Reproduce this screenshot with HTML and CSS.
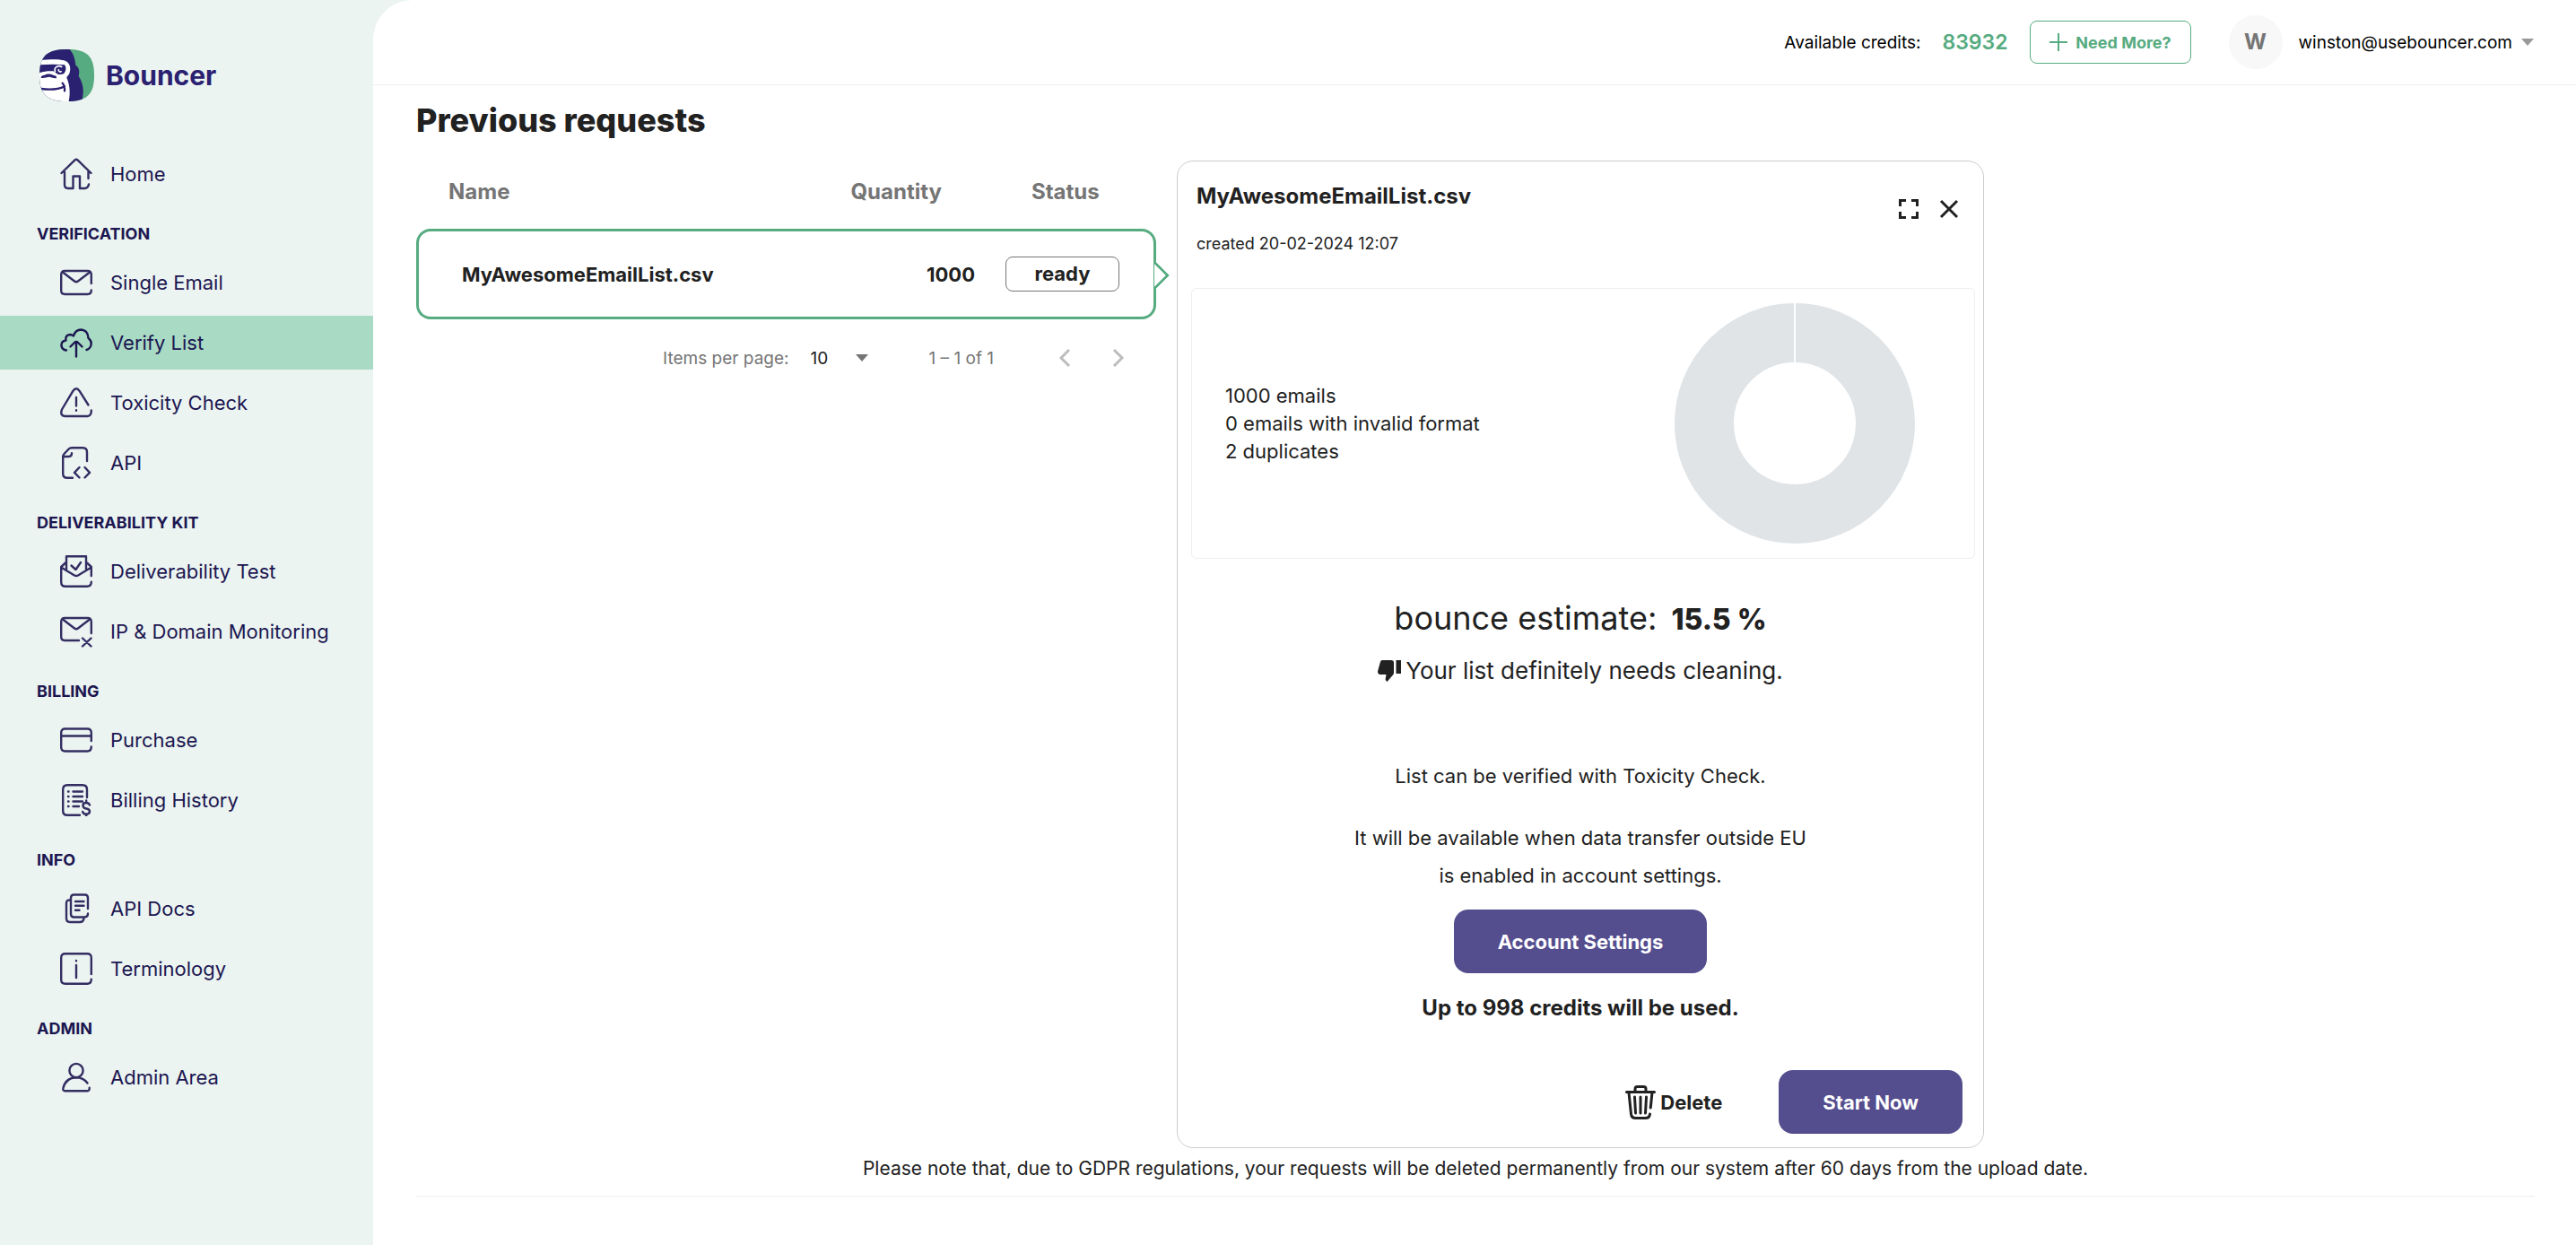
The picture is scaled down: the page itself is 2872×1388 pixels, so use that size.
FILE: index.html
```html
<!DOCTYPE html>
<html lang="en">
<head>
    <meta charset="UTF-8">
    <meta name="viewport" content="width=device-width, initial-scale=1.0">
    <title>Bouncer - Verify List</title>
    <link rel="stylesheet" href="styles.css">
</head>
<body>
    <aside class="sidebar">
        <a class="logo" href="#">
            <svg class="logo-mark" viewBox="0 0 183 174" aria-hidden="true">
                <clipPath id="logo-shape">
                    <path d="M92 0C158 0 183 22 183 87S158 174 92 174 0 152 0 87 26 0 92 0Z"/>
                </clipPath>
                <g clip-path="url(#logo-shape)">
                    <path fill="#56ab80" d="M0 0h183v174H0z"/>
                    <path fill="#2b2171" d="M0 0h101c12 14 18 30 20 53 12 8 14 20 10 36 13 22 20 45 12 78l-4 7H0Z"/>
                    <path fill="#fff" d="M0 37c38-5 66-4 82 0 22 7 24 28 18 44-3 7-8 9-9 14 8 15 14 47 7 79H0Z"/>
                    <path fill="#2b2171" d="M0 52c30-2 58-2 84 0 6 8 6 20-2 29-10 5-24 5-31-7-14-2-34-1-51 5Z"/>
                    <path fill="none" stroke="#fff" stroke-width="5" d="M53 75c-6-14 8-24 23-16M64 66c-2 8 6 12 10 7"/>
                    <path fill="#2b2171" d="M5 95c0-7 6-9 12-9 8-5 22-5 30 1 8 0 11 4 10 9-8 2-14-2-24-4-8 0-20 6-28 3Z"/>
                    <path fill="none" stroke="#2b2171" stroke-width="7" stroke-linecap="round" d="M6 132c28 4 55 3 78-8M77 113c7 8 8 17 7 26"/>
                </g>
            </svg>
            <span>Bouncer</span>
        </a>

        <nav class="menu">
            <a class="menu-item" href="#">
                <svg class="menu-icon" viewBox="0 0 36 36"><path d="M1.500 17 16.500 2.300Q18 1 19.500 2.300L34.500 17M5 15v15q0 4 4 4h5.500V20.500H22V34h5.500Q31 34 32 29.500M31.500 15v8"/></svg>
                Home
            </a>

            <h2 class="menu-title">Verification</h2>
            <a class="menu-item" href="#">
                <svg class="menu-icon" viewBox="0 0 36 36"><path d="M34.800 19V9q0-4-4-4H5.200q-4 0-4 4v18q0 4 4 4h25.600q4 0 4-4.500M3 6.500l13 10q2 1.500 4 0l13-10"/></svg>
                Single Email
            </a>
            <a class="menu-item active" href="#">
                <svg class="menu-icon" viewBox="0 0 36 36"><path d="M7 26.500q-5-.5-5.600-5.500Q1.500 16 6.500 15.500 5.500 9 12 9l3 1.500Q17 3.500 23.500 3.500 31 4 31.500 13q3.500 2.500 3.200 6.500-.5 5-5.200 6.500M18 33.500V17M11.500 22.500 16 18q2-2 4 0l4.500 4.500"/></svg>
                Verify List
            </a>
            <a class="menu-item" href="#">
                <svg class="menu-icon" viewBox="0 0 36 36"><path d="M31.500 20.500 21.500 4.700q-3.500-5-7 0L2 25.500Q-.5 32.500 5.500 33h25q4.500-.5 4.300-6.500M18 12v9.500M18 26.300v.4"/></svg>
                Toxicity Check
            </a>
            <a class="menu-item" href="#">
                <svg class="menu-icon" viewBox="0 0 36 36"><path d="M30 16V6q0-4.800-4.500-4.800H13q-2 0-3.500 1.500L4.500 8Q3.200 9.300 3.200 11v19q0 4.800 4.800 4.800h6M4 11h5.500q3.500 0 3.500-3.800M21.500 23 16 28.800l5.500 5.700M27.500 23l5.500 5.800-5.500 5.700"/></svg>
                API
            </a>

            <h2 class="menu-title">Deliverability Kit</h2>
            <a class="menu-item" href="#">
                <svg class="menu-icon" viewBox="0 0 36 36"><path d="M34.800 23V13L30 8.500M6 8.500 1.200 13v17q0 4.800 4.800 4.800h24q4.800 0 4.800-5M7 17V1.200h22V17M2 14l14 8.500q2 1 4 0L34 14M12.500 11.500l5 4.500 5.500-8"/></svg>
                Deliverability Test
            </a>
            <a class="menu-item" href="#">
                <svg class="menu-icon" viewBox="0 0 36 36"><path d="M34.800 20V7q0-4-4-4H5.200q-4 0-4 4v17q0 4 4 4H21M3 4.500l13 10q2 1.500 4 0l13-10M25 25.500l9.500 9M34.500 25.500l-9.500 9"/></svg>
                IP &amp; Domain Monitoring
            </a>

            <h2 class="menu-title">Billing</h2>
            <a class="menu-item" href="#">
                <svg class="menu-icon" viewBox="0 0 36 36"><path d="M34.800 19V10q0-4.500-4.500-4.500H5.700Q1.200 5.500 1.200 10v16q0 4.500 4.500 4.500h24.600q4.500 0 4.500-5M1.200 13.500h33.600"/></svg>
                Purchase
            </a>
            <a class="menu-item" href="#">
                <svg class="menu-icon" viewBox="0 0 36 36"><path d="M30 15V6q0-4.800-4.800-4.800H8Q3.200 1.200 3.200 6v24q0 4.800 4.800 4.800h14M9 8.500h.5M14.500 8.500H25M9 14h.5M14.500 14H25M9 19.500h.5M14.500 19.500H25M9 25h.5M14.500 25H21M33 23.500q-1-2.500-4-2.500-3.500 0-3.500 3t3.800 3.500 3.700 3.300-3.800 2.900q-3.500 0-4-2.700M29.200 18.500v2.500M29.200 33.500v2"/></svg>
                Billing History
            </a>

            <h2 class="menu-title">Info</h2>
            <a class="menu-item" href="#">
                <svg class="menu-icon" viewBox="0 0 36 36"><path d="M31 18V6q0-3.500-3.500-3.500h-12Q12 2.500 12 6v18q0 3.500 3.500 3.500H27Q31 27.500 31 23.500M11 8.500Q7 8 7 12v17q0 4 4 4h11q4 0 4.500-4M17 10h9.500M17 14.800h9.500M17 19.800h4.500"/></svg>
                API Docs
            </a>
            <a class="menu-item" href="#">
                <svg class="menu-icon" viewBox="0 0 36 36"><path d="M34.800 24V5.700q0-4.500-4.500-4.500H5.700q-4.500 0-4.500 4.500v24.600q0 4.500 4.500 4.500h24.600q4.500 0 4.500-5M18 14v14M18 9v.3"/></svg>
                Terminology
            </a>

            <h2 class="menu-title">Admin</h2>
            <a class="menu-item" href="#">
                <svg class="menu-icon" viewBox="0 0 36 36"><circle cx="18" cy="10.500" r="7.600"/><path d="M30.500 24.500Q26 18.200 18 18.200 6 18.500 3.300 30.500 3 33.200 5.500 33.200h25q2.300 0 2.200-3.500"/></svg>
                Admin Area
            </a>
        </nav>
    </aside>

    <div class="page">
        <header class="topbar">
            <span class="credits-label">Available credits:</span>
            <strong class="credits">83932</strong>
            <button class="need-more" type="button">
                <svg viewBox="0 0 22 22" aria-hidden="true"><path d="M11 1v20M1 11h20"/></svg>
                Need More?
            </button>
            <button class="account" type="button">
                <span class="avatar">W</span>
                winston@usebouncer.com
                <span class="caret"></span>
            </button>
        </header>

        <main class="content">
            <h1>Previous requests</h1>

            <div class="columns">
                <section class="requests">
                    <table>
                        <thead>
                            <tr>
                                <th>Name</th>
                                <th class="quantity">Quantity</th>
                                <th class="status">Status</th>
                            </tr>
                        </thead>
                        <tbody>
                            <tr>
                                <td>MyAwesomeEmailList.csv</td>
                                <td class="quantity">1000</td>
                                <td class="status"><span class="badge">ready</span></td>
                            </tr>
                        </tbody>
                    </table>

                    <div class="paginator">
                        <label for="page-size">Items per page:</label>
                        <div class="page-size">
                            <select id="page-size">
                                <option>10</option>
                                <option>25</option>
                                <option>50</option>
                            </select>
                            <span class="caret"></span>
                        </div>
                        <span class="range">1 – 1 of 1</span>
                        <button type="button" aria-label="Previous page" disabled>
                            <svg viewBox="0 0 14 22"><path d="M12 2 3 11l9 9"/></svg>
                        </button>
                        <button type="button" aria-label="Next page" disabled>
                            <svg viewBox="0 0 14 22"><path d="m2 2 9 9-9 9"/></svg>
                        </button>
                    </div>
                </section>

                <section class="details">
                    <div class="details-head">
                        <div>
                            <h2>MyAwesomeEmailList.csv</h2>
                            <p class="created">created 20-02-2024 12:07</p>
                        </div>
                        <div class="window-actions">
                            <button type="button" aria-label="Full screen">
                                <svg viewBox="0 0 22 22"><path d="M1.500 8V1.500H8M14 1.500h6.500V8M20.500 14v6.500H14M8 20.500H1.500V14"/></svg>
                            </button>
                            <button type="button" aria-label="Close">
                                <svg viewBox="0 0 22 22"><path d="m2 2 18 18M20 2 2 20"/></svg>
                            </button>
                        </div>
                    </div>

                    <div class="summary">
                        <ul>
                            <li>1000 emails</li>
                            <li>0 emails with invalid format</li>
                            <li>2 duplicates</li>
                        </ul>
                        <svg class="donut" viewBox="0 0 268 268" aria-hidden="true">
                            <circle cx="134" cy="134" r="101" fill="none" stroke="#e0e4e7" stroke-width="66"/>
                            <path d="M134 0v68" stroke="#fff" stroke-width="2"/>
                        </svg>
                    </div>

                    <p class="estimate">bounce estimate: <strong>15.5 %</strong></p>
                    <p class="verdict">
                        <svg viewBox="0 0 26 26" aria-hidden="true"><path d="M5 1h10q3 0 3 3v11q0 1.500-1 2.500L10.500 25 9 23.500q-.6-.8-.3-1.800L9.500 17H3q-3-.3-3-3.500L3 2.700Q3.700 1.200 5 1ZM20.500 1H26v15h-5.500z"/></svg>
                        Your list definitely needs cleaning.
                    </p>

                    <p class="toxicity">List can be verified with Toxicity Check.</p>
                    <p class="transfer">It will be available when data transfer outside EU<br>is enabled in account settings.</p>
                    <button class="primary" type="button">Account Settings</button>
                    <p class="usage">Up to 998 credits will be used.</p>

                    <div class="actions">
                        <button class="delete" type="button">
                            <svg viewBox="0 0 34 38" aria-hidden="true"><path d="M1.500 7.500h31M11 7V4q0-2.500 2.500-2.500h7Q23 1.500 23 4v3M4 8l2.500 24q.5 4.500 5 4.500h11q4.500 0 5-4.500M30 8l-1.800 17M10.500 13l1 18M17 13v18M23.500 13l-1 18"/></svg>
                            Delete
                        </button>
                        <button class="primary" type="button">Start Now</button>
                    </div>
                </section>
            </div>

            <p class="notice">Please note that, due to GDPR regulations, your requests will be deleted permanently from our system after 60 days from the upload date.</p>
        </main>
    </div>
</body>
</html>
```
FILE: styles.css
```css
* {
    box-sizing: border-box;
}

body {
    margin: 0;
    min-height: 100vh;
    display: flex;
    font-family: Inter, 'Open Sans', sans-serif;
    font-size: 22px;
    color: #212121;
    background-color: #ebf4f1;
}

h1, h2, p, ul {
    margin: 0;
    padding: 0;
}

button {
    padding: 0;
    border: none;
    background: none;
    font: inherit;
    color: inherit;
    cursor: pointer;
}

svg {
    display: block;
    flex-shrink: 0;
}

/* Sidebar */
.sidebar {
    flex: 0 0 416px;
}

.logo {
    display: flex;
    align-items: center;
    gap: 13px;
    margin: 55px 0 51px 44px;
    font-size: 30px;
    font-weight: 700;
    color: #2b2171;
    text-decoration: none;
}

.logo-mark {
    width: 61px;
    height: 58px;
}

.menu-item {
    display: flex;
    align-items: center;
    gap: 20px;
    height: 60px;
    padding-left: 67px;
    color: #1c1650;
    text-decoration: none;
}

.menu-item + .menu-item {
    margin-top: 7px;
}

.menu-item.active {
    background-color: #a8dac4;
}

.menu-icon {
    width: 36px;
    height: 36px;
    fill: none;
    stroke: #332d62;
    stroke-width: 2.4;
    stroke-linecap: round;
    stroke-linejoin: round;
}

.menu-item.active .menu-icon {
    stroke: #1c1650;
}

.menu-title {
    margin: 25px 0 12px 41px;
    font-size: 18px;
    line-height: 24px;
    font-weight: 700;
    text-transform: uppercase;
    color: #1c1650;
}

/* Top bar */
.page {
    flex: 1;
    min-width: 0;
    border-top-left-radius: 44px;
    background-color: #fff;
}

.topbar {
    display: flex;
    justify-content: flex-end;
    align-items: center;
    height: 95px;
    padding-right: 47px;
    border-bottom: 1px solid #eee;
    font-size: 19px;
    color: #000;
}

.credits {
    margin: 0 24px;
    font-size: 23px;
    font-weight: 600;
    color: #56ab80;
}

.need-more {
    display: flex;
    justify-content: center;
    align-items: center;
    gap: 8px;
    width: 180px;
    height: 48px;
    border: 1px solid #56ab80;
    border-radius: 8px;
    font-size: 18px;
    font-weight: 700;
    color: #56ab80;
}

.need-more svg {
    width: 22px;
    height: 22px;
    stroke: #56ab80;
    stroke-width: 2;
}

.account {
    display: flex;
    align-items: center;
    margin-left: 42px;
}

.avatar {
    width: 60px;
    margin-right: 18px;
    border-radius: 50%;
    background-color: #f8f8f8;
    font-size: 24px;
    line-height: 60px;
    font-weight: 700;
    color: #757575;
}

.caret {
    border: 7px solid transparent;
    border-top: 8px solid #757575;
    border-bottom: none;
}

.account .caret {
    margin-left: 10px;
    border-top-color: #999;
}

/* Content */
.content {
    margin: 0 46px 0 48px;
    border-bottom: 1px solid #eee;
}

h1 {
    padding: 18px 0 24px;
    font-size: 36px;
    line-height: 42px;
    font-weight: 800;
}

.columns {
    display: grid;
    grid-template-columns: 275fr 300fr 197fr;
    gap: 23px;
}

table {
    width: 100%;
    border-spacing: 0;
    font-weight: 700;
}

th {
    height: 76px;
    padding: 0 0 8px 36px;
    font-size: 24px;
    font-weight: 700;
    text-align: left;
    color: #757575;
}

td {
    height: 101px;
    padding: 0 0 0 48px;
    border: 3px solid #56ab80;
    border-width: 3px 0;
}

td:first-child {
    border-left-width: 3px;
    border-radius: 16px 0 0 16px;
}

td:last-child {
    position: relative;
    border-right-width: 3px;
    border-radius: 0 16px 16px 0;
}

/* Pointer towards the details card */
td:last-child::after {
    content: "";
    position: absolute;
    top: 37px;
    right: -13px;
    width: 21px;
    height: 21px;
    border: solid #56ab80;
    border-width: 3px 3px 0 0;
    background-color: #fff;
    transform: rotate(45deg);
    clip-path: polygon(0 0, 100% 0, 100% 100%);
}

th.quantity {
    padding-right: 54px;
    padding-left: 0;
    text-align: right;
}

td.quantity {
    padding-right: 17px;
    padding-left: 0;
    text-align: right;
}

.status {
    width: 185px;
}

th.status {
    padding-left: 46px;
}

td.status {
    padding-left: 17px;
}

.badge {
    display: block;
    width: 127px;
    border: 1px solid #757575;
    border-radius: 8px;
    line-height: 37px;
    text-align: center;
}

.paginator {
    display: flex;
    justify-content: flex-end;
    align-items: center;
    height: 86px;
    padding-right: 35px;
    font-size: 19px;
    color: #757575;
}

.page-size {
    display: flex;
    align-items: center;
    margin: 0 68px 0 24px;
}

.page-size select {
    width: 50px;
    padding: 0;
    border: none;
    background: none;
    appearance: none;
    font: inherit;
    color: #212121;
}

.range {
    margin-right: 72px;
}

.paginator svg {
    width: 14px;
    height: 22px;
    fill: none;
    stroke: #bdbdbd;
    stroke-width: 3;
}

.paginator button + button {
    margin-left: 46px;
}

/* Details card */
.details {
    display: flex;
    flex-direction: column;
    align-items: center;
    padding: 0 9px 15px;
    border: 1px solid #ccc;
    border-radius: 18px;
    text-align: center;
}

.details-head {
    display: flex;
    justify-content: space-between;
    width: 100%;
    height: 141px;
    padding: 24px 18px 0 12px;
    text-align: left;
}

.details h2,
.usage {
    font-size: 24px;
    line-height: 30px;
    font-weight: 700;
}

.created {
    margin-top: 25px;
    font-size: 18px;
    line-height: 26px;
}

.window-actions {
    display: flex;
    align-items: flex-start;
    gap: 23px;
    padding-top: 18px;
}

.window-actions svg {
    width: 22px;
    height: 22px;
    fill: none;
    stroke: #212121;
    stroke-width: 3;
}

.summary {
    display: flex;
    justify-content: space-between;
    align-items: center;
    align-self: stretch;
    margin-left: 6px;
    padding: 16px 66px 16px 37px;
    border: 1px solid #eee;
    border-radius: 6px;
    text-align: left;
    line-height: 31px;
}

.summary ul {
    list-style: none;
}

.donut {
    width: 268px;
}

.estimate {
    margin-top: 40px;
    font-size: 36px;
    line-height: 52px;
}

.estimate strong {
    margin-left: 6px;
    font-size: 32px;
    font-weight: 800;
}

.verdict {
    display: flex;
    align-items: center;
    gap: 5px;
    margin-top: 11px;
    font-size: 26px;
    line-height: 40px;
}

.verdict svg {
    width: 26px;
    height: 26px;
    fill: #212121;
}

.toxicity {
    margin-top: 76px;
    line-height: 42px;
}

.transfer {
    margin-top: 27px;
    line-height: 42px;
}

.primary {
    height: 71px;
    margin-top: 17px;
    padding: 0 49px;
    border-radius: 16px;
    background-color: #544d8e;
    font-weight: 700;
    color: #fff;
}

.usage {
    margin-top: 24px;
}

.actions {
    display: flex;
    align-items: center;
    align-self: flex-end;
    gap: 63px;
    margin-top: 54px;
    padding-right: 14px;
}

.actions .primary {
    margin-top: 0;
}

.delete {
    display: flex;
    align-items: center;
    gap: 5px;
    font-weight: 700;
}

.delete svg {
    width: 34px;
    height: 38px;
    fill: none;
    stroke: #212121;
    stroke-width: 3;
    stroke-linecap: round;
}

.notice {
    padding: 7px 0 14px;
    font-size: 21px;
    line-height: 32px;
    text-align: center;
}
```
